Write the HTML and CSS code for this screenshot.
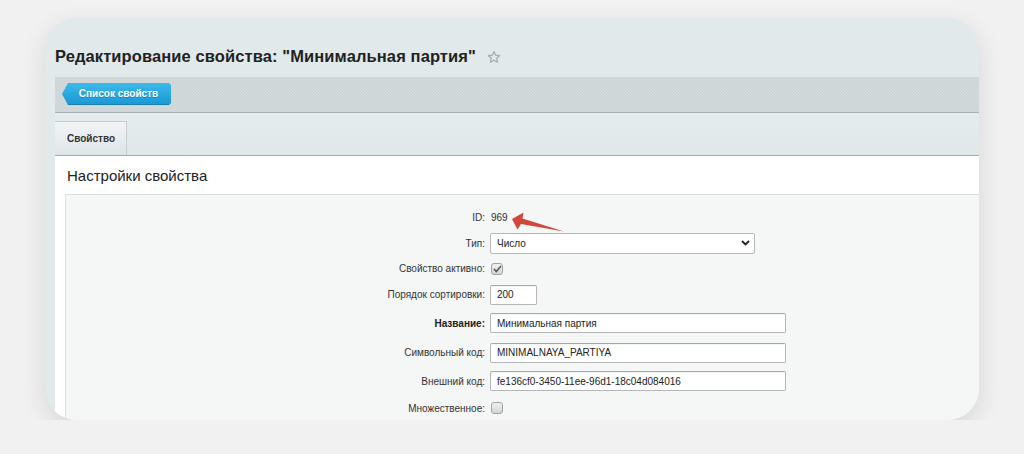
FILE: index.html
```html
<!DOCTYPE html>
<html lang="ru">
<head>
<meta charset="utf-8">
<title>Редактирование свойства</title>
<link rel="stylesheet" href="styles.css">
</head>
<body>
<div class="card">
  <div class="page">
    <h1 class="title">Редактирование свойства: "Минимальная партия"
      <svg class="star" width="14" height="14" viewBox="0 0 24 24"><path d="M12 2.5l2.9 6.3 6.9.7-5.2 4.6 1.5 6.8L12 17.4l-6.1 3.5 1.5-6.8-5.2-4.6 6.9-.7z" fill="none" stroke="#a3abad" stroke-width="2" stroke-linejoin="round"/></svg>
    </h1>
    <div class="toolbar">
      <a class="btn-back">Список свойств</a>
    </div>
    <div class="tabs">
      <div class="tab">Свойство</div>
    </div>
    <div class="panel">
      <div class="section-title">Настройки свойства</div>
      <div class="form">
        <div class="label">ID:</div>
        <div class="value"><span class="plain">969</span></div>

        <div class="label">Тип:</div>
        <div class="value">
          <div class="select"><span>Число</span>
            <svg width="9" height="6" viewBox="0 0 9 6"><path d="M1 1l3.5 3.5L8 1" fill="none" stroke="#222" stroke-width="1.8"/></svg>
          </div>
        </div>

        <div class="label">Свойство активно:</div>
        <div class="value"><span class="check checked"><svg width="9" height="8" viewBox="0 0 9 8"><path d="M1 4l2.3 2.5L8 1" fill="none" stroke="#555" stroke-width="1.5"/></svg></span></div>

        <div class="label">Порядок сортировки:</div>
        <div class="value"><div class="input w-sort">200</div></div>

        <div class="label bold">Название:</div>
        <div class="value"><div class="input w-wide">Минимальная партия</div></div>

        <div class="label">Символьный код:</div>
        <div class="value"><div class="input w-wide">MINIMALNAYA_PARTIYA</div></div>

        <div class="label">Внешний код:</div>
        <div class="value"><div class="input w-wide">fe136cf0-3450-11ee-96d1-18c04d084016</div></div>

        <div class="label">Множественное:</div>
        <div class="value"><span class="check"></span></div>
      </div>
    </div>
  </div>
  <svg class="arrow" width="934" height="402" viewBox="0 0 934 402">
    <polygon points="467,201 478.5,194.5 477.5,200.5 519,213.5 476,206 472.5,211.5" fill="#d2473b"/>
  </svg>
</div>
</body>
</html>
```
FILE: styles.css
```css
* { box-sizing: border-box; }
body {
  margin: 0;
  background: #f1f1f1;
  font-family: "Liberation Sans", Arial, sans-serif;
  color: #333;
}
.card {
  position: relative;
  margin: 18px 0 0 45px;
  width: 934px;
  height: 402px;
  border-radius: 32px;
  background: #e1e9eb;
  overflow: hidden;
  box-shadow: 0 8px 26px rgba(0, 0, 0, 0.11);
}
.page {
  padding-left: 10px;
}
.title {
  margin: 0;
  height: 59px;
  padding-top: 18px;
  display: flex;
  align-items: center;
  font-size: 16.5px;
  font-weight: bold;
  color: #222;
  letter-spacing: 0.1px;
}
.star {
  margin-left: 11px;
  margin-top: 1px;
}
.toolbar {
  height: 36px;
  background-color: #ccd4d6;
  background-image:
    linear-gradient(45deg, rgba(255,255,255,0.18) 25%, transparent 25%, transparent 75%, rgba(255,255,255,0.18) 75%),
    linear-gradient(45deg, rgba(255,255,255,0.18) 25%, transparent 25%, transparent 75%, rgba(255,255,255,0.18) 75%);
  background-size: 3px 3px;
  background-position: 0 0, 1.5px 1.5px;
  border-bottom: 1px solid #a9b3b5;
  padding: 6px 0 0 7px;
}
.btn-back {
  display: flex;
  align-items: center;
  justify-content: center;
  width: 109px;
  height: 22px;
  padding-left: 4px;
  background: linear-gradient(#3cb9ec, #1c98d3);
  color: #fff;
  font-size: 10px;
  font-weight: bold;
  text-shadow: 0 1px 0 rgba(0, 60, 100, 0.3);
  clip-path: polygon(6px 0, calc(100% - 2px) 0, 100% 2px, 100% calc(100% - 2px), calc(100% - 2px) 100%, 6px 100%, 0 50%);
  border-bottom: 1px solid #1580b5;
}
.tabs {
  height: 43px;
  padding-top: 8px;
  background: linear-gradient(#e4ecee, #dfe7e9);
  border-bottom: 1px solid #a3aeb1;
  display: flex;
}
.tab {
  width: 72px;
  height: 34px;
  background: linear-gradient(#f2f5f6, #dde4e6);
  border: 1px solid #c5cdcf;
  border-bottom: none;
  border-left: none;
  display: flex;
  align-items: center;
  padding-left: 12px;
  font-size: 10px;
  font-weight: bold;
  color: #333;
}
.panel {
  background: #fff;
  padding-left: 10px;
  height: 300px;
}
.section-title {
  height: 38px;
  display: flex;
  align-items: center;
  padding-left: 2px;
  font-size: 15px;
  color: #222;
}
.form {
  background: #f5f7f7;
  border-top: 1px solid #d9dddd;
  border-left: 1px solid #dde1e1;
  padding-top: 9px;
  height: 240px;
  display: grid;
  grid-template-columns: 424px 1fr;
  grid-template-rows: 26px 26px 25px 27px 30px 29px 28px 26px;
  font-size: 10px;
}
.label {
  text-align: right;
  padding-right: 5px;
  align-self: center;
  color: #333;
}
.label.bold {
  font-weight: bold;
  color: #222;
}
.value {
  align-self: center;
  display: flex;
  align-items: center;
}
.plain {
  padding-left: 1px;
  color: #333;
}
.select {
  width: 265px;
  height: 21px;
  background: #fff;
  border: 1px solid #b8b8b8;
  border-radius: 2px;
  display: flex;
  align-items: center;
  justify-content: space-between;
  padding: 0 4px 0 6px;
  color: #222;
}
.input {
  height: 20px;
  background: #fff;
  border: 1px solid #b6b6b6;
  border-top-color: #a8a8a8;
  border-radius: 2px;
  display: flex;
  align-items: center;
  padding: 0 6px;
  color: #222;
  box-shadow: inset 0 1px 1px rgba(0,0,0,0.05);
}
.w-sort { width: 47px; }
.w-wide { width: 296px; }
.check {
  width: 12px;
  height: 12px;
  margin-left: 1px;
  border: 1px solid #a3a3a3;
  border-radius: 3px;
  background: linear-gradient(#f0f0f0, #d4d4d4);
  display: flex;
  align-items: center;
  justify-content: center;
}
.arrow {
  position: absolute;
  left: 0;
  top: 0;
}
```
